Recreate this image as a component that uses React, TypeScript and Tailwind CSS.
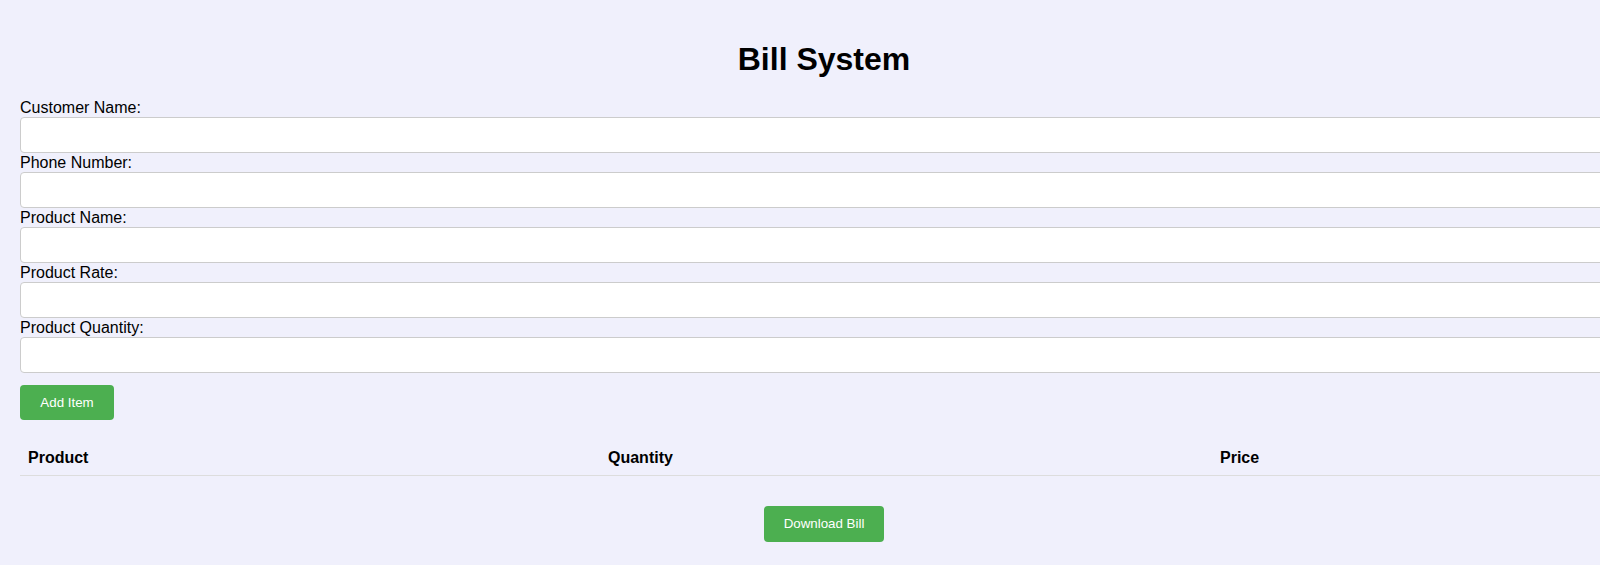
import React from 'react'

const fields = ['Customer Name:', 'Phone Number:', 'Product Name:', 'Product Rate:', 'Product Quantity:']

export default function App() {
  const [values, setValues] = React.useState<string[]>(fields.map(() => ''))

  const handleChange = (i: number, v: string) => {
    const next = [...values]
    next[i] = v
    setValues(next)
  }

  return (
    <div className="w-full h-[565px] overflow-hidden bg-[#f0f0fc] text-black font-['Liberation_Sans',Arial,sans-serif]">
      <div className="w-[1608px] ml-[20px] pt-[41px]">
        <h1 className="text-center text-[32px] font-bold leading-[37px]">Bill System</h1>

        <div className="mt-[20px] flex flex-col">
          {fields.map((label, i) => (
            <div key={label} className="flex flex-col">
              <label className="text-[16px] leading-[19px] h-[19px]">{label}</label>
              <input
                value={values[i]}
                onChange={(e) => handleChange(i, e.target.value)}
                className="w-full h-[36px] bg-white border border-[#cccccc] rounded-[4px] px-2 text-[16px] focus:outline-none"
              />
            </div>
          ))}
        </div>

        <button className="mt-[12px] w-[94px] h-[35px] bg-[#4caf50] text-white text-[13.33px] rounded-[4px]">
          Add Item
        </button>

        {/* items table, header only */}
        <div className="mt-[21px] grid grid-cols-[580px_612px_1fr] border-b border-[#dddddd]">
          <div className="px-[8px] py-[8px] leading-[18px] text-[16px] font-bold">Product</div>
          <div className="px-[8px] py-[8px] leading-[18px] text-[16px] font-bold">Quantity</div>
          <div className="px-[8px] py-[8px] leading-[18px] text-[16px] font-bold">Price</div>
        </div>

        <div className="mt-[30px] flex justify-center">
          <button className="w-[120px] h-[36px] bg-[#4caf50] text-white text-[13.33px] rounded-[4px]">
            Download Bill
          </button>
        </div>
      </div>
    </div>
  )
}
